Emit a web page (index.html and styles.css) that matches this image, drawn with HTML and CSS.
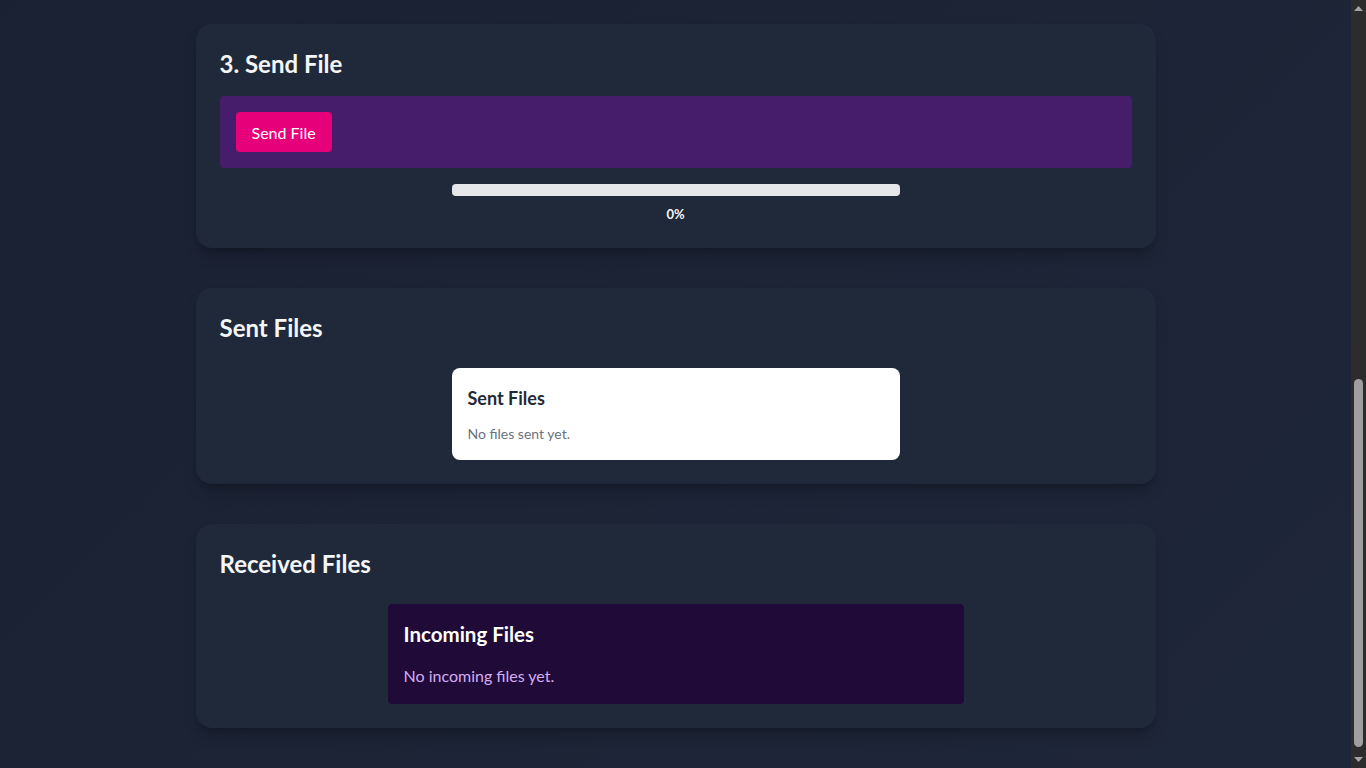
FILE: index.html
```html
<!DOCTYPE html>
<html lang="en">
<head>
<meta charset="utf-8">
<title>File Transfer</title>
<link rel="stylesheet" href="styles.css">
</head>
<body>
<div class="viewport">
  <main class="page">
    <section class="card">
      <h2 class="card-title">3. Send File</h2>
      <div class="send-panel">
        <button class="btn-send" type="button">Send File</button>
      </div>
      <div class="progress">
        <div class="progress-track"><div class="progress-fill" style="width:0%"></div></div>
        <div class="progress-label">0%</div>
      </div>
    </section>

    <section class="card">
      <h2 class="card-title">Sent Files</h2>
      <div class="sent-box">
        <h3 class="sent-title">Sent Files</h3>
        <p class="sent-empty">No files sent yet.</p>
      </div>
    </section>

    <section class="card">
      <h2 class="card-title">Received Files</h2>
      <div class="incoming-box">
        <h3 class="incoming-title">Incoming Files</h3>
        <p class="incoming-empty">No incoming files yet.</p>
      </div>
    </section>
  </main>
  <div class="scrollbar" aria-hidden="true">
    <div class="sb-arrow">
      <svg width="9" height="5" viewBox="0 0 9 5"><path d="M4.5 0 L9 5 L0 5 Z" fill="#a3a3a3"/></svg>
    </div>
    <div class="sb-track"><div class="sb-thumb"></div></div>
    <div class="sb-arrow">
      <svg width="9" height="5" viewBox="0 0 9 5"><path d="M0 0 L9 0 L4.5 5 Z" fill="#a3a3a3"/></svg>
    </div>
  </div>
</div>
</body>
</html>
```

FILE: styles.css
```css
* { box-sizing: border-box; }
html, body {
  margin: 0;
  height: 768px;
  overflow: hidden;
}
body {
  font-family: "Lato", "Noto Sans", sans-serif;
  color: #f3f4f6;
  background: linear-gradient(135deg, #1a2132 0%, #1c2436 50%, #1e2739 100%);
}
.viewport {
  display: flex;
  height: 768px;
}
.page {
  flex: 1;
  display: flex;
  flex-direction: column;
  align-items: center;
  gap: 40px;
  padding: 24px 0 40px;
}
.card {
  width: 960px;
  background: #1f2939;
  border-radius: 16px;
  padding: 24px;
  display: flex;
  flex-direction: column;
  box-shadow: 0 10px 15px -3px rgba(0,0,0,0.22), 0 4px 6px -4px rgba(0,0,0,0.2);
}
.card-title {
  margin: 0 0 16px;
  font-size: 24px;
  line-height: 32px;
  font-weight: 700;
  color: #f5f6f8;
}
.send-panel {
  background: #461d6b;
  border-radius: 4px;
  padding: 16px;
  display: flex;
}
.btn-send {
  height: 40px;
  padding: 0 16px;
  border: none;
  border-radius: 4px;
  background: #e6007a;
  color: #ffffff;
  font-family: inherit;
  font-size: 16px;
  cursor: pointer;
}
.progress {
  margin-top: 16px;
  display: flex;
  flex-direction: column;
  align-items: center;
  gap: 8px;
}
.progress-track {
  width: 448px;
  height: 12px;
  border-radius: 4px;
  background: #e5e7eb;
  overflow: hidden;
}
.progress-fill {
  height: 100%;
  background: #e6007a;
}
.progress-label {
  font-size: 13px;
  line-height: 20px;
  font-weight: 700;
  color: #f3f4f6;
}
.card-title + .sent-box,
.card-title + .incoming-box { margin-top: 8px; }
.sent-box {
  align-self: center;
  width: 448px;
  background: #ffffff;
  border-radius: 8px;
  padding: 16px;
}
.sent-title {
  margin: 0 0 12px;
  font-size: 18px;
  line-height: 28px;
  font-weight: 700;
  color: #1f2937;
}
.sent-empty {
  margin: 0;
  font-size: 14px;
  line-height: 20px;
  color: #6b7280;
}
.incoming-box {
  align-self: center;
  width: 576px;
  background: #200a38;
  border-radius: 4px;
  padding: 16px;
}
.incoming-title {
  margin: 0 0 16px;
  font-size: 20.5px;
  line-height: 28px;
  font-weight: 700;
  color: #ffffff;
}
.incoming-empty {
  margin: 0;
  font-size: 16px;
  line-height: 24px;
  color: #d4adf5;
}

/* scrollbar column */
.scrollbar {
  width: 15px;
  flex: 0 0 15px;
  background: #2c2c2c;
  display: flex;
  flex-direction: column;
}
.sb-arrow {
  height: 17px;
  display: flex;
  align-items: center;
  justify-content: center;
}
.sb-arrow svg { display: block; }
.sb-track {
  flex: 1;
  display: flex;
  flex-direction: column;
  justify-content: flex-end;
  padding: 0 3px 4px;
}
.sb-thumb {
  height: 368px;
  border-radius: 5px;
  background: #9f9f9f;
}
```
